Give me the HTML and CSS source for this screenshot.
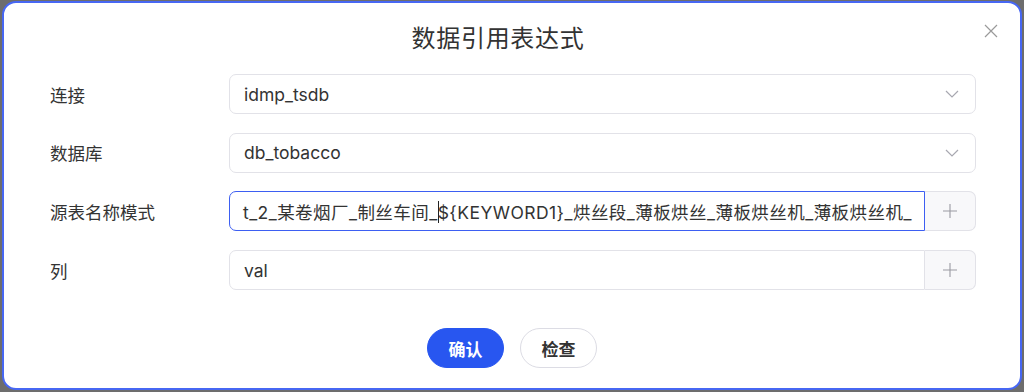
FILE: index.html
```html
<!DOCTYPE html>
<html lang="zh">
<head>
<meta charset="utf-8">
<title>数据引用表达式</title>
<link rel="stylesheet" href="styles.css">
</head>
<body>
<div class="dialog">
  <div class="header">
    <div class="title">数据引用表达式</div>
    <svg class="close" width="14" height="14" viewBox="0 0 14 14"><path d="M1 1L13 13M13 1L1 13" stroke="#9a9a9a" stroke-width="1.2" fill="none"/></svg>
  </div>
  <div class="form">
    <div class="row">
      <div class="label">连接</div>
      <div class="field select"><span class="value">idmp_tsdb</span>
        <svg class="chev" width="14" height="8" viewBox="0 0 14 8"><path d="M1 1L7 7L13 1" stroke="#a8a8b0" stroke-width="1.2" fill="none"/></svg>
      </div>
    </div>
    <div class="row">
      <div class="label">数据库</div>
      <div class="field select"><span class="value">db_tobacco</span>
        <svg class="chev" width="14" height="8" viewBox="0 0 14 8"><path d="M1 1L7 7L13 1" stroke="#a8a8b0" stroke-width="1.2" fill="none"/></svg>
      </div>
    </div>
    <div class="row">
      <div class="label">源表名称模式</div>
      <div class="group">
        <div class="field input focused"><span class="value">t_2_某卷烟厂_制丝车间_<span class="caret"></span>${KEYWORD1}_烘丝段_薄板烘丝_薄板烘丝机_薄板烘丝机_</span></div>
        <div class="addon"><svg width="16" height="16" viewBox="0 0 16 16"><path d="M8 1V15M1 8H15" stroke="#9a9aa2" stroke-width="1.1" fill="none"/></svg></div>
      </div>
    </div>
    <div class="row">
      <div class="label">列</div>
      <div class="group">
        <div class="field input"><span class="value">val</span></div>
        <div class="addon"><svg width="16" height="16" viewBox="0 0 16 16"><path d="M8 1V15M1 8H15" stroke="#9a9aa2" stroke-width="1.1" fill="none"/></svg></div>
      </div>
    </div>
  </div>
  <div class="footer">
    <button class="btn primary">确认</button>
    <button class="btn">检查</button>
  </div>
</div>
</body>
</html>
```
FILE: styles.css
```css
html, body {
  margin: 0;
  padding: 0;
}
body {
  width: 1024px;
  height: 392px;
  background: #6d6d6d;
  font-family: Inter, "Noto Sans CJK SC", sans-serif;
  color: #333;
  overflow: hidden;
}
.dialog {
  box-sizing: border-box;
  margin: 1px 2px 0 2px;
  width: 1020px;
  height: 389px;
  background: #fff;
  border: 2px solid #4767f3;
  border-radius: 14px;
  display: flex;
  flex-direction: column;
}
.header {
  position: relative;
  height: 71px;
  display: flex;
  align-items: center;
  justify-content: center;
}
.title {
  font-family: "Noto Sans CJK SC", sans-serif;
  font-size: 24px;
  font-weight: 400;
  letter-spacing: 0.7px;
  color: #333;
  margin-top: -4px;
  margin-left: -28px;
}
.close {
  position: absolute;
  right: 22px;
  top: 21px;
}
.form {
  display: flex;
  flex-direction: column;
  gap: 18.7px;
  padding: 0 44px 0 46px;
}
.row {
  display: flex;
  align-items: center;
  height: 40px;
}
.label {
  width: 179px;
  flex: none;
  font-size: 17.5px;
  color: #333;
}
.field {
  box-sizing: border-box;
  height: 40px;
  border: 1px solid #e2e2e8;
  border-radius: 7px;
  display: flex;
  align-items: center;
  padding: 0 14px;
  font-size: 17.5px;
  color: #333;
  overflow: hidden;
  white-space: nowrap;
}
.select {
  flex: 1;
  justify-content: space-between;
  padding-right: 16px;
}
.group {
  flex: 1;
  min-width: 0;
  display: flex;
  height: 40px;
}
.input {
  flex: 1;
  border-radius: 7px 0 0 7px;
  min-width: 0;
}
.focused {
  border: 1.5px solid #3d5ef2;
  padding-left: 13px;
  letter-spacing: 0.45px;
}
.caret {
  display: inline-block;
  width: 1px;
  height: 22px;
  background: #222;
  vertical-align: -4px;
  margin: 0 -1px 0 0;
}
.addon {
  box-sizing: border-box;
  width: 51px;
  height: 40px;
  flex: none;
  border: 1px solid #e2e2e8;
  border-left: none;
  border-radius: 0 7px 7px 0;
  background: #f8f8fa;
  display: flex;
  align-items: center;
  justify-content: center;
}
.footer {
  display: flex;
  justify-content: center;
  gap: 16px;
  margin-top: 38px;
}
.btn {
  box-sizing: border-box;
  width: 77px;
  height: 40px;
  border-radius: 20px;
  border: 1px solid #dcdce4;
  background: #fff;
  color: #333;
  font-family: "Noto Sans CJK SC", sans-serif;
  font-size: 17px;
  font-weight: 700;
  padding: 0;
}
.primary {
  background: #2856f0;
  border-color: #2856f0;
  color: #fff;
}
```
